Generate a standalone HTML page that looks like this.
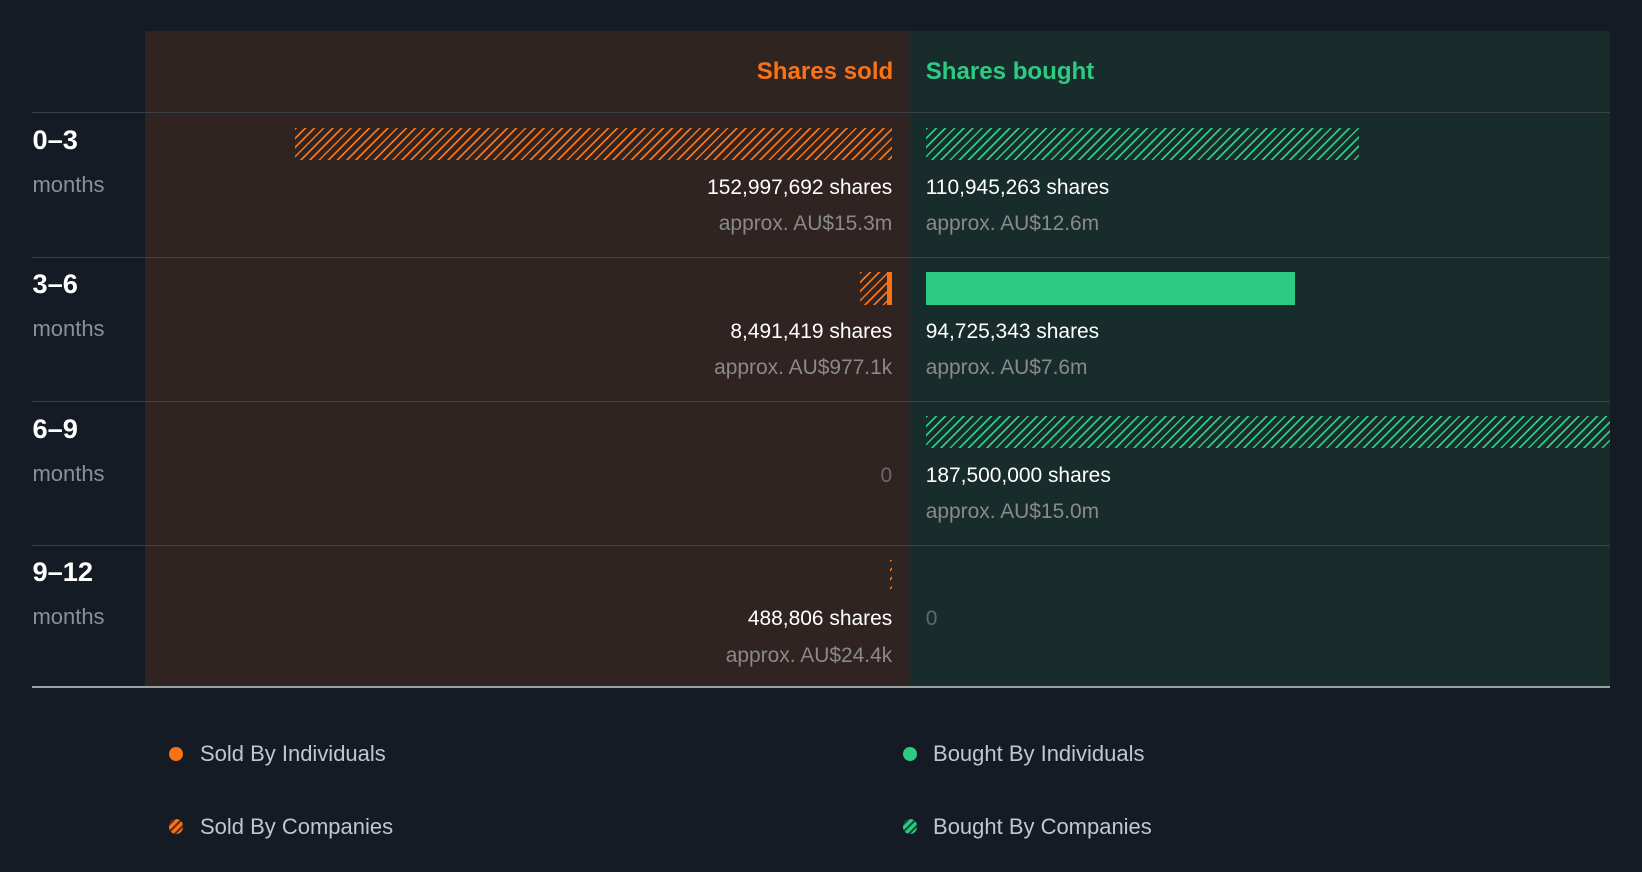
<!DOCTYPE html>
<html><head><meta charset="utf-8"><style>
html,body{margin:0;padding:0;background:#151b24;}
body{width:1568px;height:832px;zoom:1.04719;position:relative;overflow:hidden;font-family:"Liberation Sans",sans-serif;}
.a{position:absolute;}
.sold{left:138px;width:730px;top:30px;height:626px;background:#2f2422;}
.bought{left:868px;width:669px;top:30px;height:626px;background:#182c2c;}
.line{left:31px;width:1506px;height:1px;background:#3a4046;}
.h{font-size:23px;font-weight:bold;top:55px;}
.lbl{left:31px;font-size:26px;font-weight:bold;color:#fff;}
.mo{left:31px;font-size:21px;color:#8b9096;}
.sh{font-size:20px;color:#fff;}
.ap{font-size:20px;color:#8a8a8a;}
.r{right:716px;text-align:right;}
.l{left:884px;}
.ho{background:repeating-linear-gradient(135deg,#f97316 0 1.6px,transparent 1.6px 6.2px);}
.hg{background:repeating-linear-gradient(135deg,#2dca84 0 1.6px,transparent 1.6px 6.2px);}
.dot{width:14px;height:14px;border-radius:50%;}
.leg{font-size:21px;color:#c3c6ca;}
</style></head><body>
<div class="a sold"></div><div class="a bought"></div>
<div class="a h" style="right:715px;color:#f97316">Shares sold</div>
<div class="a h" style="left:884px;color:#2dca84">Shares bought</div>
<div class="a line" style="top:107px"></div>
<div class="a line" style="top:245px"></div>
<div class="a line" style="top:383px"></div>
<div class="a line" style="top:520px"></div>
<div class="a" style="left:31px;width:1506px;top:655px;height:2px;background:#9aa0a3"></div>

<div class="a lbl" style="top:118px">0–3</div><div class="a mo" style="top:164px">months</div>
<div class="a lbl" style="top:256px">3–6</div><div class="a mo" style="top:302px">months</div>
<div class="a lbl" style="top:394px">6–9</div><div class="a mo" style="top:440px">months</div>
<div class="a lbl" style="top:531px">9–12</div><div class="a mo" style="top:577px">months</div>

<div class="a ho" style="left:282px;width:570px;top:122px;height:31px"></div>
<div class="a hg" style="left:884px;width:414px;top:122px;height:31px"></div>
<div class="a sh r" style="top:168px">152,997,692 shares</div>
<div class="a ap r" style="top:202px">approx. AU$15.3m</div>
<div class="a sh l" style="top:168px">110,945,263 shares</div>
<div class="a ap l" style="top:202px">approx. AU$12.6m</div>

<div class="a ho" style="left:821px;width:26px;top:260px;height:31px"></div>
<div class="a" style="left:847px;width:5px;top:260px;height:31px;background:#f97316"></div>
<div class="a" style="left:884px;width:353px;top:260px;height:31px;background:#2dca84"></div>
<div class="a sh r" style="top:306px">8,491,419 shares</div>
<div class="a ap r" style="top:340px">approx. AU$977.1k</div>
<div class="a sh l" style="top:306px">94,725,343 shares</div>
<div class="a ap l" style="top:340px">approx. AU$7.6m</div>

<div class="a hg" style="left:884px;width:653px;top:397px;height:31px"></div>
<div class="a ap r" style="top:443px;color:#6a6a6a">0</div>
<div class="a sh l" style="top:443px">187,500,000 shares</div>
<div class="a ap l" style="top:477px">approx. AU$15.0m</div>

<div class="a ho" style="left:850px;width:2px;top:535px;height:31px"></div>
<div class="a sh r" style="top:580px">488,806 shares</div>
<div class="a ap r" style="top:615px">approx. AU$24.4k</div>
<div class="a ap l" style="top:580px;color:#5e6a6a">0</div>

<div class="a dot" style="left:161px;top:713px;background:#f97316"></div>
<div class="a leg" style="left:191px;top:708px">Sold By Individuals</div>
<div class="a dot" style="left:862px;top:713px;background:#2dca84"></div>
<div class="a leg" style="left:891px;top:708px">Bought By Individuals</div>
<div class="a dot" style="left:161px;top:782px;background:repeating-linear-gradient(135deg,#f97316 0 3px,#5a2e14 3px 5px)"></div>
<div class="a leg" style="left:191px;top:777px">Sold By Companies</div>
<div class="a dot" style="left:862px;top:782px;background:repeating-linear-gradient(135deg,#2dca84 0 3px,#144a34 3px 5px)"></div>
<div class="a leg" style="left:891px;top:777px">Bought By Companies</div>
</body></html>
